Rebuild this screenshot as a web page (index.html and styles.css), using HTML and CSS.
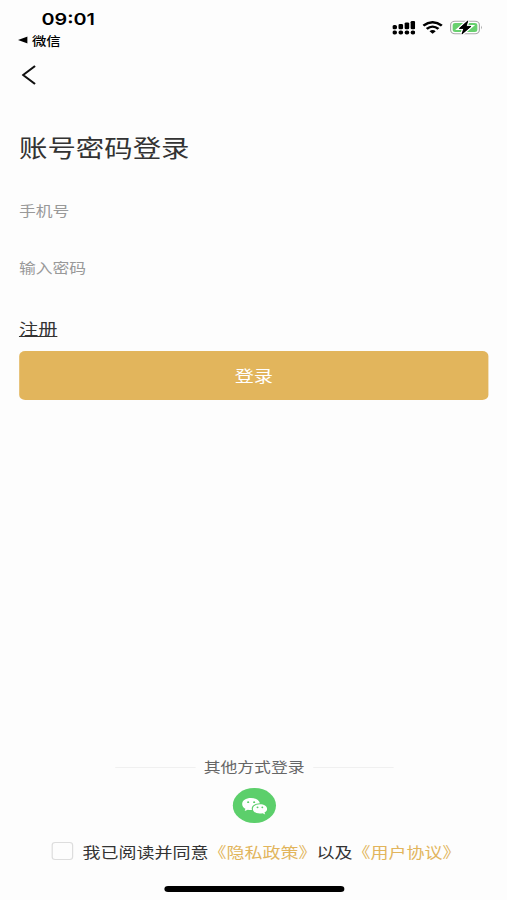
FILE: index.html
```html
<!DOCTYPE html>
<html lang="zh-CN">
<head>
    <meta charset="UTF-8">
    <meta name="viewport" content="width=device-width, initial-scale=1.0">
    <title>账号密码登录</title>
    <link rel="stylesheet" href="styles.css">
</head>
<body>

<div class="screen">
    <header class="status-bar">
        <div class="status-left">
            <div class="time">09:01</div>
            <div class="back-app">
                <svg width="8" height="8" viewBox="0 0 8 8"><path d="M0 4L8 0.4V7.6Z"/></svg>
                <span>微信</span>
            </div>
        </div>
        <div class="status-icons">
            <svg class="signal" width="19" height="15" viewBox="0 0 19 15">
                <rect x="0" y="5" width="3.8" height="4.2" rx="1.5"/>
                <rect x="5.1" y="3.9" width="3.8" height="5.3" rx="1.2"/>
                <rect x="10.2" y="2.4" width="3.8" height="6.8" rx="1.2"/>
                <rect x="15.2" y="1" width="3.8" height="8.2" rx="1.2"/>
                <rect x="0" y="10.6" width="3.8" height="3.8" rx="1.6"/>
                <rect x="5.1" y="10.6" width="3.8" height="3.8" rx="1.6"/>
                <rect x="10.2" y="10.6" width="3.8" height="3.8" rx="1.6"/>
                <rect x="15.2" y="10.6" width="3.8" height="3.8" rx="1.6"/>
            </svg>
            <svg class="wifi" width="17" height="13" viewBox="0 0 17 13" fill="none" stroke="#000" stroke-width="2.3">
                <path d="M0.8 4.7Q8.5 -2.3 16.2 4.7"/>
                <path d="M3.6 7.9Q8.5 3.4 13.4 7.9"/>
                <path d="M8.5 12.8L5.9 10.2Q8.5 8 11.1 10.2Z" fill="#000" stroke="none"/>
            </svg>
            <svg class="battery" width="28" height="15" viewBox="0 0 28 15">
                <rect x="0.5" y="1.3" width="24" height="12.4" rx="3.6" fill="#fff" stroke="#aaa"/>
                <rect x="2.2" y="3" width="20.6" height="9" rx="2" fill="#68d06f"/>
                <path d="M26 5.6Q27.4 7.5 26 9.4Z" fill="#999"/>
                <path d="M14.8 1L7.8 8.4H11.6L10 14L17.4 6.4H13.4Z" stroke="#fff" stroke-width="3" paint-order="stroke"/>
                <path d="M14.8 1L7.8 8.4H11.6L10 14L17.4 6.4H13.4Z" stroke="#000" stroke-width="0.8"/>
            </svg>
        </div>
    </header>

    <nav class="nav-bar">
        <svg width="12" height="20" viewBox="0 0 12 20" fill="none" stroke="#111" stroke-width="1.7"><path d="M11.2 1L1.2 10L11.2 19"/></svg>
    </nav>

    <main class="login">
        <h1>账号密码登录</h1>
        <input class="field" type="tel" placeholder="手机号">
        <input class="field" type="password" placeholder="输入密码">
        <a class="register">注册</a>
        <button class="btn">登录</button>
    </main>

    <footer class="other">
        <div class="divider"><span>其他方式登录</span></div>
        <div class="wechat">
            <svg width="22" height="18" viewBox="0 0 22 18">
                <path fill="#fff" d="M8.2 1C3.8 1 0.8 3.6 0.8 6.9C0.8 9 1.8 10.7 3.5 11.8L2.9 14.1L5.5 12.7C6.6 13 8 13.1 9 12.9C7.9 9.5 10.8 6.5 15.6 6.3C14.9 3.1 12 1 8.2 1Z"/>
                <path fill="#fff" d="M15.6 7.3C12.2 7.3 9.7 9.3 9.7 11.9C9.7 14.6 12.2 16.5 15.6 16.5C16.4 16.5 17.1 16.4 17.8 16.2L20 17.4L19.4 15.4C20.8 14.5 21.6 13.3 21.6 11.9C21.6 9.3 19 7.3 15.6 7.3Z"/>
                <g fill="#5ccf6b">
                    <circle cx="5.8" cy="5.2" r="0.9"/>
                    <circle cx="10.8" cy="5.2" r="0.9"/>
                    <circle cx="13.6" cy="10.4" r="0.8"/>
                    <circle cx="17.6" cy="10.4" r="0.8"/>
                </g>
            </svg>
        </div>
        <div class="agreement">
            <span class="checkbox"></span>
            <p>我已阅读并同意<a>《隐私政策》</a>以及<a>《用户协议》</a></p>
        </div>
        <div class="home-bar"></div>
    </footer>
</div>

</body>
</html>
```

FILE: styles.css
```css
* {
    box-sizing: border-box;
}

body {
    margin: 0;
    background-color: #fdfdfd;
    font-family: "Liberation Sans", "Noto Sans CJK SC", sans-serif;
    overflow: hidden;
}

/* wide display: the layout is 422.5px and gets stretched sideways */
.screen {
    display: flex;
    flex-direction: column;
    width: 422.5px;
    height: 900px;
    transform: scaleX(1.2);
    transform-origin: 0 0;
    color: #333;
}

.status-bar {
    display: flex;
    justify-content: space-between;
    height: 56px;
    padding: 9px 19.4px 0 14.6px;
    color: #000;
}

.time {
    padding-left: 20px;
    font-family: Inter, sans-serif;
    font-size: 16.5px;
    font-weight: 600;
    line-height: 21px;
}

.back-app {
    display: flex;
    align-items: center;
    gap: 4px;
    height: 20px;
    font-size: 12px;
    font-weight: 500;
}

.status-icons {
    display: flex;
    align-items: center;
    height: 37px;
    gap: 6px;
}

.nav-bar {
    height: 66px;
    padding: 9px 0 0 17.6px;
}

.login {
    display: flex;
    flex-direction: column;
    align-items: flex-start;
    padding: 0 15.2px 0 15.8px;
}

h1 {
    margin: 9px 0 32px;
    font-size: 23.7px;
    font-weight: 400;
    line-height: 36px;
}

.field {
    width: 100%;
    height: 24px;
    margin-bottom: 33px;
    padding: 0;
    border: none;
    outline: none;
    background: none;
    font-family: inherit;
    font-size: 14px;
}

.field::placeholder {
    color: #999;
}

.register {
    font-size: 16px;
    line-height: 24px;
    margin: 5px 0 9px;
    text-decoration: underline;
    text-underline-offset: 1px;
}

.btn {
    width: 100%;
    height: 49px;
    padding: 0 0 2px;
    border: none;
    border-radius: 5px;
    background-color: #e2b55c;
    color: #fff;
    font-family: inherit;
    font-size: 16px;
}

.other {
    display: flex;
    flex-direction: column;
    align-items: center;
    margin-top: auto;
    padding: 0 0 8px 1px;
}

.divider {
    display: flex;
    align-items: center;
    gap: 7px;
    margin-bottom: 9px;
    font-size: 14px;
    line-height: 24px;
    color: #666;
}

.divider::before,
.divider::after {
    content: "";
    width: 67px;
    height: 1px;
    background-color: #f0f0f0;
}

.wechat {
    display: flex;
    align-items: center;
    justify-content: center;
    width: 35.5px;
    height: 35px;
    border-radius: 50%;
    background-color: #5ccf6b;
}

.agreement {
    display: flex;
    align-items: center;
    gap: 8px;
    height: 24px;
    margin: 16px 0 23px;
    padding-left: 3px;
}

.checkbox {
    width: 18px;
    height: 18px;
    border: 1px solid #ddd;
    border-radius: 3px;
}

.agreement p {
    margin: 0;
    font-size: 15px;
    white-space: nowrap;
    text-spacing-trim: space-all;
}

.agreement a {
    color: #e2b55c;
}

.home-bar {
    width: 150px;
    height: 6px;
    border-radius: 3px;
    background-color: #000;
}
```
